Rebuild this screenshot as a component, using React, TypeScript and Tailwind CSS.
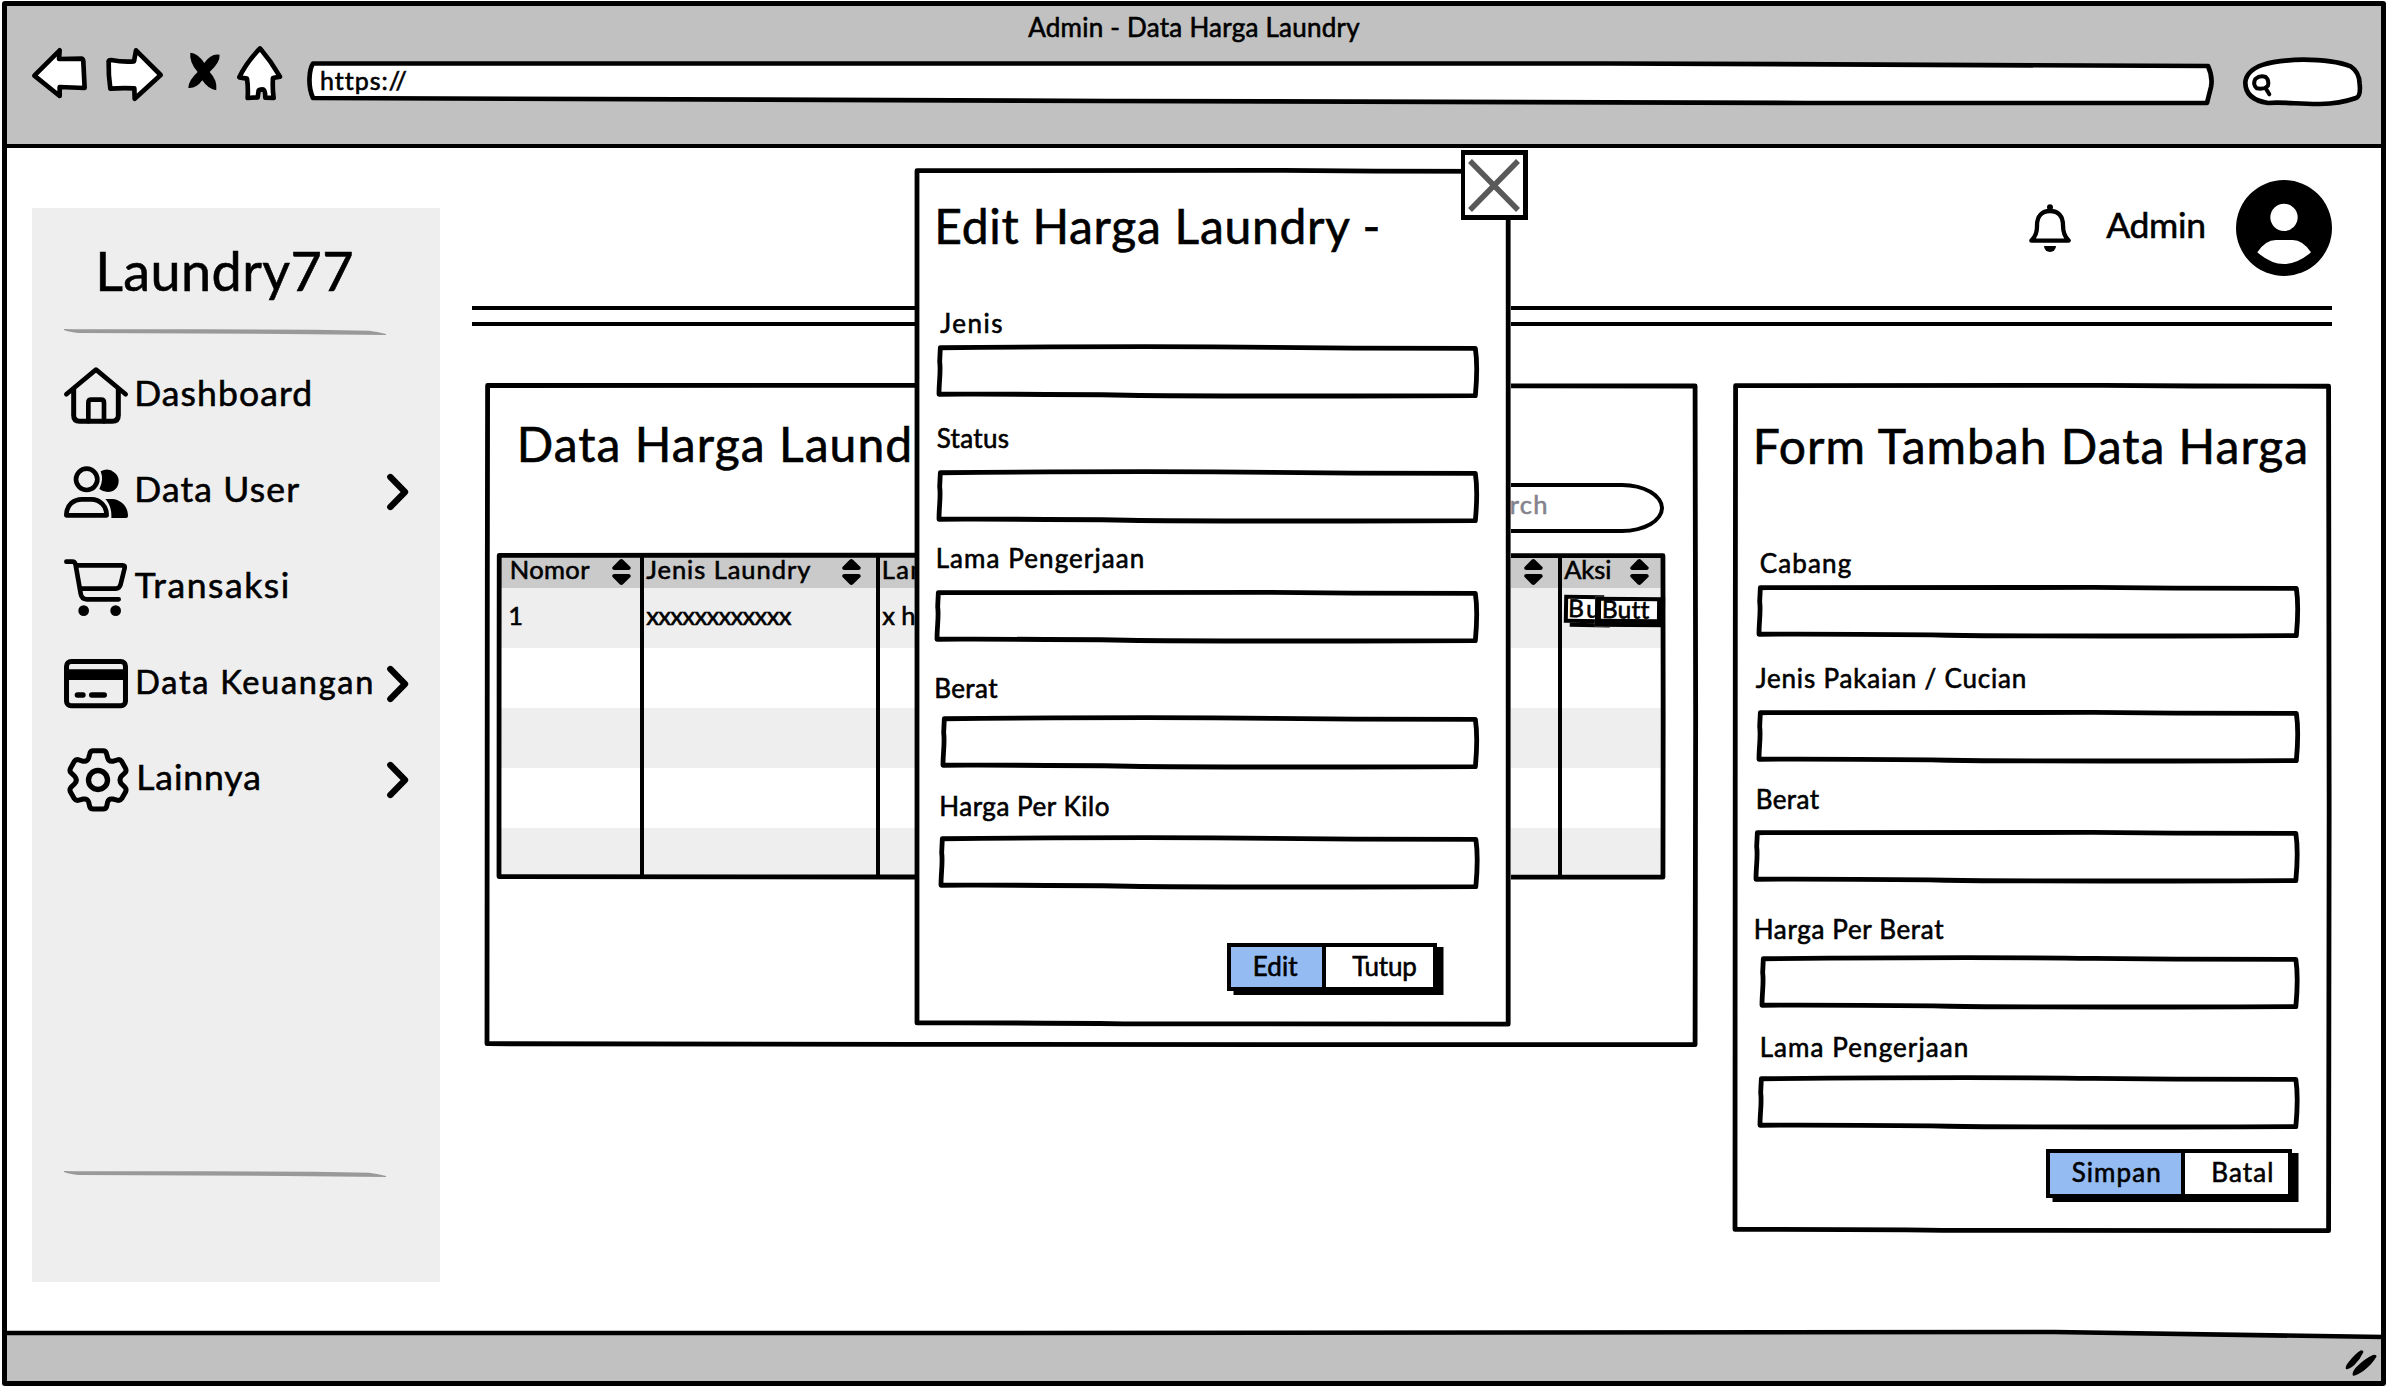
import { useLayoutEffect, useRef, type ReactNode } from "react";

/* Text whose inked width is fitted to `w` pixels by adjusting the tracking. */
function Txt({ w, className = "", children }: { w: number; className?: string; children: string }) {
  const ref = useRef<HTMLSpanElement>(null);
  useLayoutEffect(() => {
    const el = ref.current;
    if (!el) return;
    const cs = getComputedStyle(el);
    const ctx = document.createElement("canvas").getContext("2d");
    if (!ctx) return;
    ctx.font = `${cs.fontWeight} ${cs.fontSize} ${cs.fontFamily}`;
    const m = ctx.measureText(children);
    const ink = m.actualBoundingBoxRight + m.actualBoundingBoxLeft;
    if (children.length > 1) el.style.letterSpacing = `${(w - ink) / (children.length - 1)}px`;
    el.style.marginLeft = `${m.actualBoundingBoxLeft}px`;
    el.parentElement!.style.width = `${w}px`;
  }, [w, children]);
  return (
    <span className={`block shrink-0 whitespace-nowrap leading-none ${className}`}>
      <span ref={ref} className="block w-max translate-x-[0.2px] translate-y-[1.4px]">
        {children}
      </span>
    </span>
  );
}

/* Hand-drawn outline that fills its relative parent. `k` is the wobble in percent of the height. */
function Outline({ k = 0.25, kx = 0.2 }: { k?: number; kx?: number }) {
  return (
    <svg
      className="pointer-events-none absolute left-[2.4px] top-[2.4px] h-[calc(100%-4.8px)] w-[calc(100%-4.8px)] overflow-visible"
      viewBox="0 0 100 100"
      preserveAspectRatio="none"
      fill="none"
      stroke="#000"
      strokeWidth="4.8"
      strokeLinejoin="round"
    >
      <path
        vectorEffect="non-scaling-stroke"
        d={`M${kx} ${k * 0.5} C25 ${-k * 0.3} 50 ${-k * 0.3} 62 ${k * 0.3} S90 ${k} ${100 - kx} ${k} C${100 + kx * 0.5} 30 100 70 ${100 - kx} 100 C75 ${100 + k * 0.2} 50 ${100 + k * 0.6} 35 ${100 - k * 0.3} S10 ${100 - k} 0 ${100 - k} C0 70 ${kx * 1.5} 50 ${kx * 0.5} 30 Z`}
      />
    </svg>
  );
}

function Icon({ box, className, children }: { box: string; className: string; children: ReactNode }) {
  return (
    <svg viewBox={box} className={`shrink-0 overflow-visible ${className}`} fill="none" stroke="#000" strokeWidth="14" strokeLinecap="round" strokeLinejoin="round">
      {children}
    </svg>
  );
}

const House = () => (
  <Icon box="192 533 192 172" className="h-[57.3px] w-[64px]">
    <path d="M199 615 L288 541 L377 615" />
    <path d="M221 600 V678 Q221 696 239 696 H337 Q355 696 355 678 V600" strokeWidth="15" />
    <path d="M265 696 V640 Q265 631 274 631 H303 Q312 631 312 640 V696" />
  </Icon>
);
const People = () => (
  <Icon box="192 828 192 156" className="h-[52px] w-[64px]">
    <circle cx="260" cy="868" r="32" />
    <path d="M199 976 C199 944 222 928 246 928 H274 C300 928 320 948 320 976 Z" />
    <path d="M302 844 Q325 832 344 848 Q356 858 356 873 Q356 892 340 902 Q318 912 298 897 Q312 870 302 844 Z" fill="#000" stroke="none" />
    <path d="M316 927 H336 C366 929 384 952 384 978 Q384 984 378 984 H334 Q336 948 316 927 Z" fill="#000" stroke="none" />
  </Icon>
);
const Cart = () => (
  <Icon box="192 118 192 172" className="h-[57.3px] w-[64px]">
    <path d="M199 126 H217 Q225 126 227 136 L242 222 Q245 239 260 239 H356" />
    <path d="M229 137 H368 Q376 137 374 145 L362 194 Q359 207 347 207 H241" />
    <circle cx="251" cy="273" r="16" fill="#000" stroke="none" />
    <circle cx="347" cy="273" r="16" fill="#000" stroke="none" />
  </Icon>
);
const Card = () => (
  <Icon box="192 418 192 148" className="h-[49.3px] w-[64px]">
    <rect x="199.5" y="425.5" width="177" height="133" rx="14" strokeWidth="15" />
    <path d="M192 449 H384 V481 H192 Z" fill="#000" stroke="none" />
    <path d="M232 526 H249 M275 526 H313" strokeWidth="16" />
  </Icon>
);
const Gear = () => (
  <Icon box="192 684 192 192" className="h-[64px] w-[64px]">
    <circle cx="294" cy="780" r="28.5" strokeWidth="16" />
    <path
      strokeWidth="15"
      d="M269 702 Q271 692 280 692 H309 Q318 692 320 702 L323 714 Q326 725 338 724 L355 719 Q361 718 365 724 L377 746 Q380 753 375 758 L364 769 Q356 780 364 791 L375 802 Q380 808 377 815 L365 836 Q361 842 354 841 L338 837 Q326 835 323 846 L320 859 Q318 867 309 867 H280 Q271 867 269 859 L266 846 Q262 835 250 837 L234 841 Q227 842 223 836 L211 815 Q208 808 213 802 L224 791 Q234 780 224 769 L213 758 Q208 753 211 746 L223 724 Q227 718 234 719 L250 724 Q262 725 266 714 Z"
    />
  </Icon>
);
const Chevron = () => (
  <Icon box="1160 852 65 108" className="ml-auto h-[36px] w-[21.7px]">
    <path d="M1170 861 L1214 906 L1170 951" strokeWidth="19" />
  </Icon>
);
const Sort = ({ className = "" }: { className?: string }) => (
  <Icon box="425 567 57 78" className={`mt-[4px] h-[26px] w-[19px] ${className}`}>
    <path d="M448 569 Q453 565 458 569 L481 592 Q482 600 474 600 H433 Q424 600 426 592 Z M433 612 H474 Q482 612 481 620 L458 643 Q453 647 448 643 L426 620 Q424 612 433 612 Z" fill="#000" stroke="none" />
  </Icon>
);

const menu = [
  { label: "Dashboard", w: 173, icon: <House />, more: false, cls: "ml-[9px] text-[35.5px] pb-[8px]" },
  { label: "Data User", w: 162, icon: <People />, more: true, cls: "ml-[9px] text-[35.5px] pb-[8px]" },
  { label: "Transaksi", w: 153, icon: <Cart />, more: false, cls: "ml-[6.5px] text-[35.5px] pb-[8px]" },
  { label: "Data Keuangan", w: 234, icon: <Card />, more: true, cls: "ml-[9px] text-[32.5px] pb-[6px]" },
  { label: "Lainnya", w: 120, icon: <Gear />, more: true, cls: "ml-[11px] text-[35.5px] pb-[8px]" },
];

function Rule({ className }: { className: string }) {
  return (
    <svg viewBox="0 0 322 6" className={`ml-[32px] h-[6px] w-[322px] shrink-0 ${className}`} fill="#999">
      <path d="M0 0 L10 .3 H140 L250 .7 L305 1.8 Q315 3 322 5 V6 L220 5 L15 4 Q5 3 0 1 Z" />
    </svg>
  );
}

type FieldData = { label: string; w: number; lc: string; ic: string };

const editFields: FieldData[] = [
  { label: "Jenis", w: 62, lc: "mt-[59.7px] ml-[25px]", ic: "mt-[9.6px] ml-[22px]" },
  { label: "Status", w: 72, lc: "mt-[26.5px] ml-[21.5px]", ic: "mt-[19.7px] ml-[22px]" },
  { label: "Lama Pengerjaan", w: 205, lc: "mt-[20.8px] ml-[22.5px]", ic: "mt-[19.7px] ml-[20px]" },
  { label: "Berat", w: 62, lc: "mt-[30.8px] ml-[21px]", ic: "mt-[15.4px] ml-[26px]" },
  { label: "Harga Per Kilo", w: 168, lc: "mt-[23.1px] ml-[26px]", ic: "mt-[17.7px] ml-[23.5px]" },
];

const addFields: FieldData[] = [
  { label: "Cabang", w: 90, lc: "mt-[79.8px] ml-[28px]", ic: "mt-[9.6px] ml-[24px]" },
  { label: "Jenis Pakaian / Cucian", w: 269, lc: "mt-[26.2px] ml-[23px]", ic: "mt-[20px] ml-[24px]" },
  { label: "Berat", w: 62, lc: "mt-[21.2px] ml-[25px]", ic: "mt-[19.3px] ml-[21.5px]" },
  { label: "Harga Per Berat", w: 189, lc: "mt-[31.2px] ml-[23px]", ic: "mt-[15.3px] ml-[27.5px]" },
  { label: "Lama Pengerjaan", w: 205, lc: "mt-[23.2px] ml-[29px]", ic: "mt-[17.3px] ml-[25.5px]" },
];

function Fields({ items }: { items: FieldData[] }) {
  return (
    <>
      {items.map((f) => (
        <label key={f.label} className="flex shrink-0 flex-col">
          <Txt w={f.w} className={`text-[26px] ${f.lc}`}>
            {f.label}
          </Txt>
          <span className={`relative mr-[31.5px] block h-[53.5px] ${f.ic}`}>
            <Outline k={3} kx={0.25} />
          </span>
        </label>
      ))}
    </>
  );
}

function ButtonPair({ className, first, second }: { className: string; first: ReactNode; second: ReactNode }) {
  return (
    <div className={`flex h-[48.5px] shrink-0 border-4 border-t-[4.5px] border-black bg-white shadow-[6.5px_4px_0_0_#000] ${className}`}>
      {first}
      {second}
    </div>
  );
}

const grid = "grid grid-cols-[141px_236px_228px_227px_227px_102px]";
const cell = "border-l-4 border-black flex items-start";

export default function App() {
  return (
    <div className="relative flex h-[1388px] w-[2388px] flex-col overflow-hidden bg-white px-[4px] pb-[3px] pt-[3px] font-['Lato','Open_Sans',sans-serif] text-black [-webkit-text-stroke:0.6px_currentColor]">
      {/* Browser toolbar */}
      <header className="flex h-[143px] shrink-0 flex-col bg-[#c1c1c1] pt-[10px]">
        <Txt w={332} className="mx-auto text-[26px]">
          Admin - Data Harga Laundry
        </Txt>
        <div className="flex items-start">
          <Icon box="95 143 165 151" className="ml-[28px] mt-[9px] h-[50.3px] w-[55px]">
            <path d="M102 226 L178 150 L176 176 L243 175 Q249 176 249 184 L253 263 L178 260 L178 287 Z" fill="#fff" />
          </Icon>
          <Icon box="317 143 171 159" className="ml-[18.7px] mt-[9px] h-[53px] w-[57px]">
            <path d="M325 184 Q325 179 332 179 Q370 186 401 183 L407 150 L481 224 L403 295 L402 264 Q365 262 330 265 Q324 225 325 184 Z" fill="#fff" />
          </Icon>
          <Icon box="563 155 97 115" className="ml-[25px] mt-[12.7px] h-[38.3px] w-[32.3px]">
            <path d="M570 157 Q592 158 612 188 Q632 158 658 163 Q660 185 628 215 Q652 240 648 270 Q625 268 606 240 Q588 265 564 263 Q563 242 592 215 Q566 185 570 157 Z" fill="#000" stroke="none" />
          </Icon>
          <Icon box="712 138 136 162" className="ml-[17.3px] mt-[7px] h-[54px] w-[45.3px]">
            <path d="M781 145 Q815 185 841 230 L820 234 Q818 265 822 294 L797 293 Q797 268 790 268 Q777 268 777 272 L774 292 L744 294 Q746 262 742 236 L719 232 Q738 190 781 145 Z" fill="#fff" />
          </Icon>
          <div className="relative ml-[24.3px] mt-[22px] h-[45px] w-[1907px]">
            <svg viewBox="0 0 1907 45" className="absolute inset-0 h-full w-full overflow-visible" fill="#fff" stroke="#000" strokeWidth="4.7" strokeLinejoin="round">
              <path d="M6 2.5 H1300 L1901 5 Q1906 16 1904 26 L1900 42 H1500 L800 40 L6 37 Q2 28 2.5 17 Q3 7 6 2.5 Z" />
            </svg>
            <Txt w={84.5} className="relative ml-[14px] mt-[5.5px] text-[25px]">
              https://
            </Txt>
          </div>
          <Icon box="849 170 358 150" className="ml-[29px] mt-[18px] h-[50px] w-[119.3px]">
            <path d="M924 308 C885 302 855 285 856 245 C862 195 930 180 1030 178 Q1120 178 1172 198 Q1198 215 1199 250 Q1203 288 1188 293 Q1140 310 1080 311 C1020 312 970 304 924 308 Z" fill="#fff" />
            <path d="M890 264 Q877 252 886 236 Q900 224 917 230 Q928 240 924 256 Q915 268 890 264 Z M916 262 L928 282" strokeWidth="12" />
          </Icon>
        </div>
      </header>

      {/* Page */}
      <main className="flex min-h-0 flex-1">
        <aside className="ml-[28px] mt-[62px] flex h-[1073.5px] w-[408px] shrink-0 flex-col bg-[#eee]">
          <Txt w={253} className="ml-[67px] mt-[35px] text-[54px]">
            Laundry77
          </Txt>
          <Rule className="mt-[32px]" />
          <nav className="mt-[13px] flex flex-col pl-[32px] pr-[31px]">
            {menu.map((m) => (
              <div key={m.label} className="flex h-[96px] items-center">
                {m.icon}
                <Txt w={m.w} className={m.cls}>
                  {m.label}
                </Txt>
                {m.more && <Chevron />}
              </div>
            ))}
          </nav>
          <Rule className="mt-[343px]" />
        </aside>

        <section className="ml-[32px] flex w-[1860px] shrink-0 flex-col">
          <div className="mt-[34px] flex h-[96px] shrink-0 items-center justify-end">
            <Icon box="207 612 126 145" className="mr-[35px] h-[48.3px] w-[42px]">
              <circle cx="270" cy="622" r="9" fill="#000" stroke="none" />
              <path d="M214 722 Q232 706 231 676 C231 648 246 633 270 633 C295 633 309 648 309 676 Q309 706 326 722 Z" strokeWidth="13" />
              <path d="M252 738 H288 A18 18 0 0 1 252 738 Z" fill="#000" stroke="none" />
            </Icon>
            <Txt w={98} className="mr-[32px] pb-[8px] text-[35.5px]">
              Admin
            </Txt>
            <svg viewBox="828 540 288 288" className="h-[96px] w-[96px]">
              <circle cx="972" cy="684" r="144" />
              <circle cx="972" cy="652" r="41" fill="#fff" />
              <path d="M892 757 Q916 720 948 720 H998 Q1028 720 1053 757 Q1012 792 972 792 Q932 792 892 757 Z" fill="#fff" />
            </svg>
          </div>
          <div className="mt-[30px] h-[20px] shrink-0 border-y-4 border-black" />

          <div className="mt-[56.5px] flex items-start">
            <div className="relative ml-[12.5px] flex h-[664.5px] w-[1213.5px] shrink-0 flex-col">
              <Outline k={0.15} kx={0.05} />
              <Txt w={436} className="ml-[36px] mt-[36.5px] text-[48px]">
                Data Harga Laundry
              </Txt>
              <div className="ml-auto mr-[34px] mt-[15.5px] h-[50px] w-[300px] rounded-[42px/25px] border-4 border-black pl-[98px] pt-[4px] text-[#85838c]">
                <Txt w={80} className="text-[25.5px]">
                  Search
                </Txt>
              </div>
              <div className="relative ml-[12px] mt-[20px] h-[327px] w-[1169px] pb-[2px] pl-[2.5px] pr-[5px] pt-[2px]">
                <div className={`${grid} h-[33.5px] bg-[#cacaca]`}>
                  <div className="flex items-start pl-[12.5px] pr-[9.5px]">
                    <Txt w={78.5} className="mt-[1px] text-[25.5px]">Nomor</Txt>
                    <Sort className="ml-auto" />
                  </div>
                  <div className={`${cell} pl-[2px] pr-[15.5px]`}>
                    <Txt w={164} className="mt-[1px] text-[25.5px]">Jenis Laundry</Txt>
                    <Sort className="ml-auto" />
                  </div>
                  <div className={`${cell} pl-[3.5px] pr-[15.5px]`}>
                    <Txt w={61} className="mt-[1px] text-[25.5px]">Lama</Txt>
                    <Sort className="ml-auto" />
                  </div>
                  <div className={`${cell} pl-[3px] pr-[15.5px]`}>
                    <Sort className="ml-auto" />
                  </div>
                  <div className={`${cell} border-l-0 pl-[3px] pr-[15.5px]`}>
                    <Sort className="ml-auto" />
                  </div>
                  <div className={`${cell} pl-[2px] pr-[11px]`}>
                    <Txt w={46} className="mt-[1px] text-[25.5px]">Aksi</Txt>
                    <Sort className="ml-auto" />
                  </div>
                </div>
                <div className={`${grid} h-[60px] bg-[#eee]`}>
                  <div className="pl-[11px] pt-[14px]">
                    <Txt w={8} className="text-[25.5px]">1</Txt>
                  </div>
                  <div className={`${cell} pl-[2px] pt-[14px]`}>
                    <Txt w={145.5} className="text-[25.5px]">xxxxxxxxxxxx</Txt>
                  </div>
                  <div className={`${cell} pl-[2px] pt-[14px]`}>
                    <Txt w={60} className="text-[25.5px]">x hari</Txt>
                  </div>
                  <div className={cell} />
                  <div className={`${cell} border-l-0`} />
                  <div className={`${cell} pl-[2px] pt-[7px]`}>
                    <div className="h-[28px] w-[40px] shrink-0 rotate-1 overflow-hidden border-4 border-black bg-white shadow-[6px_4px_0_0_#000]">
                      <Txt w={28} className="ml-[2px] -mt-[4px] text-[24.5px]">Bu</Txt>
                    </div>
                    <div className="relative -ml-[9px] mt-[2px] h-[30px] w-[70px] shrink-0 rotate-[0.6deg] border-b-[8px] border-l-[6px] border-r-[8px] border-t-[4px] border-black bg-white">
                      <Txt w={45} className="ml-[2.5px] -mt-[5.5px] text-[24.5px]">Butt</Txt>
                    </div>
                  </div>
                </div>
                {["bg-white h-[60px]", "bg-[#eee] h-[60px]", "bg-white h-[60px]", "bg-[#eee] h-[49px]"].map((c, i) => (
                  <div key={i} className={`${grid} ${c}`}>
                    <div />
                    <div className={cell} />
                    <div className={cell} />
                    <div className={cell} />
                    <div />
                    <div className={cell} />
                  </div>
                ))}
                <Outline k={0.2} kx={0.02} />
              </div>
            </div>

            <div className="relative ml-[34.5px] flex h-[850.5px] w-[599px] shrink-0 flex-col">
              <Outline k={0.15} kx={0.1} />
              <Txt w={550} className="ml-[24px] mt-[38.5px] text-[48px]">
                Form Tambah Data Harga
              </Txt>
              <Fields items={addFields} />
              <ButtonPair
                className="ml-[313.5px] mt-[19.5px] w-[246px]"
                first={
                  <div className="flex w-[135px] border-r-4 border-black bg-[#94bbf2] pl-[21.5px] pt-[5px]">
                    <Txt w={87.5} className="text-[26px]">Simpan</Txt>
                  </div>
                }
                second={<Txt w={59} className="ml-[28px] mt-[5px] text-[26px]">Batal</Txt>}
              />
            </div>
          </div>
        </section>
      </main>

      {/* Status bar */}
      <footer className="relative flex h-[52px] shrink-0 items-start justify-end bg-[#c1c1c1]">
        <svg viewBox="0 0 2380 52" className="absolute inset-0 h-full w-full overflow-visible">
          <path d="M0 0 H2050 L2380 4 V-6 H0 Z" fill="#fff" />
          <path d="M0 0 Q400 -2 1000 0 L2050 -1 L2380 4" fill="none" stroke="#000" strokeWidth="4.7" />
        </svg>
        <Icon box="434 150 96 78" className="relative mr-[7.5px] mt-[17px] h-[26px] w-[32px]">
          <path d="M482 151 Q490 151 489 157 Q480 178 462 195 Q445 209 437 208 Q433 200 445 186 Q466 160 482 151 Z M518 165 Q528 163 529 169 Q515 194 490 212 Q468 227 458 227 Q453 219 466 203 Q494 175 518 165 Z" fill="#000" stroke="none" />
        </Icon>
      </footer>

      {/* Window frame */}
      <div className="pointer-events-none absolute bottom-[2px] left-[2px] right-[2px] top-[1px] rounded-[3px] border-[5px] border-black">
        <div className="mt-[137.5px] h-[4.7px] bg-black" />
      </div>

      {/* Edit dialog */}
      <div className="absolute left-[915px] top-[168px] flex h-[859px] w-[596px] flex-col bg-white">
        <Outline k={0.15} kx={0} />
        <Txt w={440.5} className="ml-[23px] mt-[33px] text-[48px]">
          Edit Harga Laundry -
        </Txt>
        <Fields items={editFields} />
        <ButtonPair
          className="ml-[311.5px] mt-[53.5px] w-[210px]"
          first={
            <div className="flex w-[95px] border-r-4 border-black bg-[#94bbf2] pl-[24px] pt-[5px]">
              <Txt w={43.5} className="text-[26px]">Edit</Txt>
            </div>
          }
          second={<Txt w={64} className="ml-[26.5px] mt-[5px] text-[26px]">Tutup</Txt>}
        />
        <div className="absolute left-[546px] top-[-18px] h-[69.5px] w-[66.5px] border-[5px] border-l-4 border-black bg-white">
          <svg viewBox="0 0 52 53" className="ml-[3px] mt-[3.5px] h-[53px] w-[52px]" stroke="#595959" strokeWidth="5.5">
            <path d="M2 2 L50 51 M50 2 L2 51" />
          </svg>
        </div>
      </div>
    </div>
  );
}
